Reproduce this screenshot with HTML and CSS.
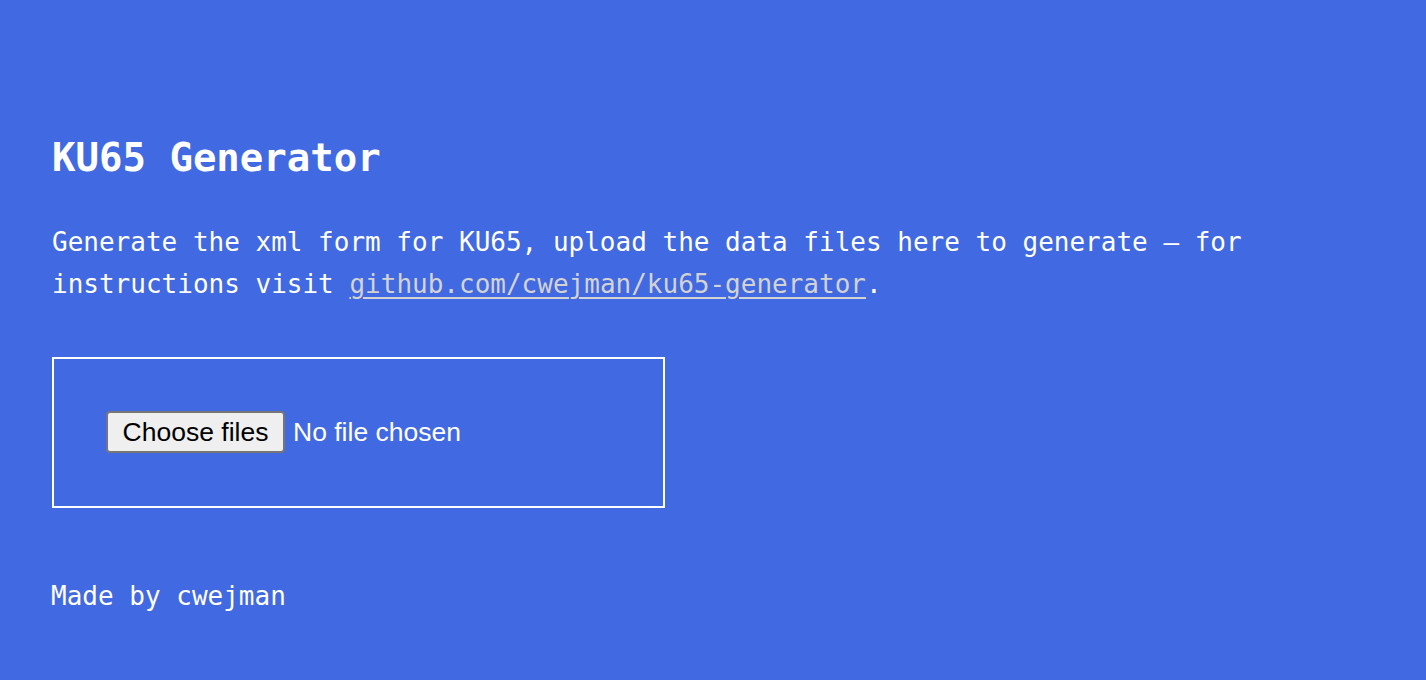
FILE: index.html
```html
<!DOCTYPE html>
<html lang="en">
<head>
<meta charset="utf-8">
<title>KU65 Generator</title>
<link rel="stylesheet" href="styles.css">
</head>
<body>
<main class="page">
  <h1 class="title">KU65 Generator</h1>
  <p class="intro">Generate the xml form for KU65, upload the data files here to generate — for instructions visit <a class="link" href="#">github.com/cwejman/ku65-generator</a>.</p>
  <div class="dropbox">
    <div class="file-row">
      <span class="file-btn">Choose files</span>
      <span class="file-status">No file chosen</span>
    </div>
  </div>
  <footer class="footer">Made by cwejman</footer>
</main>
</body>
</html>
```

FILE: styles.css
```css
html, body {
  margin: 0;
  padding: 0;
  background: #4169e1;
}
body {
  color: #ffffff;
  font-family: "DejaVu Sans Mono", "Liberation Mono", monospace;
  font-size: 26px;
  line-height: 1.6;
  height: 680px;
  overflow: hidden;
}
.page {
  padding: 127px 52px 0 52px;
  max-width: 1322px;
  box-sizing: border-box;
}
.title {
  margin: 0 0 33px 0;
  font-size: 39px;
  line-height: 62px;
  font-weight: bold;
}
.intro {
  margin: 0 0 52px 0;
  max-width: 1322px;
}
.link {
  color: #d3d3d3;
  text-decoration: underline;
  text-underline-offset: 4px;
  text-decoration-thickness: 2px;
}
.dropbox {
  width: 613px;
  height: 151px;
  box-sizing: border-box;
  border: 2px solid #ffffff;
  padding: 52px;
}
.file-row {
  display: flex;
  align-items: center;
  gap: 8px;
  font-family: "Liberation Sans", Arial, sans-serif;
  font-size: 26.5px;
  line-height: 1;
}
.file-btn {
  display: flex;
  align-items: center;
  justify-content: center;
  box-sizing: border-box;
  width: 179px;
  height: 42px;
  background: #efefef;
  color: #000000;
  border: 2px solid #767676;
  border-radius: 4px;
}
.file-status {
  color: #ffffff;
}
.footer {
  margin-top: 68px;
  margin-left: -1px;
}
```
